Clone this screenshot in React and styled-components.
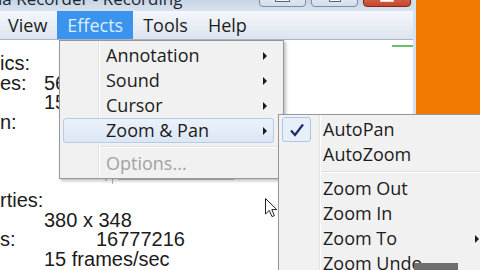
import React from 'react';
import styled, { createGlobalStyle } from 'styled-components';

const GlobalStyle = createGlobalStyle`
  html, body { margin: 0; padding: 0; }
  body { width: 480px; height: 270px; overflow: hidden; font-family: "Open Sans", "Noto Sans", sans-serif; }
`;

const Screen = styled.div`
  position: relative;
  width: 480px;
  height: 270px;
  display: flex;
  overflow: hidden;
  background: #f27a02;
`;

const Window = styled.div`
  width: 413px;
  display: flex;
  flex-direction: column;
  border-right: 3px solid #d3e2f2;
  box-shadow: 1px 0 0 #2d3b4a, 2px 0 0 #7a8796;
  background: #fff;
`;

const TitleBar = styled.div`
  height: 11px;
  flex-shrink: 0;
  display: flex;
  justify-content: space-between;
  overflow: hidden;
  background: linear-gradient(#c6d4e4, #d9e3ef);
`;

const TitleText = styled.div`
  margin-top: -10px;
  margin-left: -2px;
  font-size: 17px;
  line-height: 18px;
  color: #1d2633;
  white-space: nowrap;
`;

const CaptionButtons = styled.div`
  display: flex;
  gap: 5px;
  margin-top: -13px;
  margin-right: 2px;
  height: 20px;
`;

const CaptionButton = styled.div`
  width: ${({ $w }) => $w}px;
  height: 20px;
  border: 1px solid ${({ $close }) => ($close ? '#7d2a1c' : '#7b8ea5')};
  border-radius: 0 0 4px 4px;
  background: ${({ $close }) =>
    $close ? 'linear-gradient(#e08a74, #c8452b)' : 'linear-gradient(#eef3f9, #d3deeb)'};
  display: flex;
  align-items: flex-end;
  justify-content: center;
  padding-bottom: 4px;
  box-sizing: border-box;
`;

const Glyph = styled.div`
  width: ${({ $w }) => $w}px;
  height: 5px;
  border: 1px solid ${({ $light }) => ($light ? '#f4d6cf' : '#56657a')};
  border-top: none;
  background: ${({ $light }) => ($light ? '#fff' : '#f6f8fb')};
`;

const MenuBar = styled.div`
  height: 28px;
  flex-shrink: 0;
  display: flex;
  margin-left: -2px;
  border-bottom: 1px solid #a8b7c8;
  background: linear-gradient(#f4f7fb, #e6ecf4 60%, #dce4ee);
`;

const MenuBarItem = styled.div`
  padding: 0 10px;
  font-size: 18px;
  line-height: 28px;
  color: ${({ $active }) => ($active ? '#dcefff' : '#1c1c1c')};
  background: ${({ $active }) => ($active ? '#3a93ec' : 'transparent')};
`;

const Content = styled.div`
  flex: 1;
  display: flex;
  flex-direction: column;
  background: #fff;
  font-family: "Liberation Sans", Arial, sans-serif;
  font-size: 20px;
  color: #1b1b1b;
`;

const GreenBar = styled.div`
  align-self: flex-end;
  width: 21px;
  height: 2px;
  margin-top: 5px;
  background: #6cc06c;
`;

const InfoList = styled.div`
  margin-top: 7px;
  display: flex;
  flex-direction: column;
`;

const InfoRow = styled.div`
  display: flex;
  height: 19.6px;
  line-height: 19.6px;
  white-space: nowrap;
`;

const Label = styled.span`
  width: 44px;
  flex-shrink: 0;
`;

const Value = styled.span`
  padding-left: ${({ $indent }) => $indent || 0}px;
`;

const Slider = styled.div`
  display: flex;
  align-items: center;
  margin-left: 105px;
  margin-top: 4px;
  gap: 5px;
  height: 8px;
`;

const SliderDot = styled.div`
  width: 2px;
  height: 2px;
  background: #c8c8c8;
`;

const SliderThumb = styled.div`
  width: 1px;
  height: 8px;
  background: #b0b0b0;
`;

const SliderTrack = styled.div`
  width: 116px;
  height: 1px;
  background: #c4c4c4;
`;

const Desktop = styled.div`
  flex: 1;
  background: #f27a02;
`;

const Menu = styled.div`
  position: absolute;
  left: ${({ $left }) => $left}px;
  top: ${({ $top }) => $top}px;
  width: ${({ $width }) => $width}px;
  padding: 2px 0;
  border: 1px solid #979797;
  box-shadow: 2px 2px 3px rgba(0, 0, 0, 0.25);
  font-size: 18px;
  color: #1c1c1c;
  background: linear-gradient(
    to right,
    #f1f1f1 ${({ $gutter }) => $gutter}px,
    #e2e3e3 ${({ $gutter }) => $gutter}px,
    #e2e3e3 ${({ $gutter }) => $gutter + 1}px,
    #fff ${({ $gutter }) => $gutter + 1}px,
    #fff ${({ $gutter }) => $gutter + 2}px,
    #f1f1f1 ${({ $gutter }) => $gutter + 2}px
  );
`;

const MenuItem = styled.div`
  display: flex;
  align-items: center;
  height: 25px;
  margin: 0 9px 0 3px;
  padding-right: 6px;
  box-sizing: border-box;
  border: 1px solid ${({ $hover }) => ($hover ? '#b5cbe8' : 'transparent')};
  border-radius: 3px;
  background: ${({ $hover }) => ($hover ? 'linear-gradient(#eaf1fa, #dce7f5)' : 'transparent')};
  color: ${({ $disabled }) => ($disabled ? '#a2a2a2' : '#1c1c1c')};
  line-height: 25px;
  white-space: nowrap;
`;

const IconCell = styled.div`
  width: 29px;
  height: 25px;
  margin: -1px 0 -1px -1px;
  flex-shrink: 0;
  box-sizing: border-box;
  display: flex;
  align-items: center;
  justify-content: center;
  border: 1px solid ${({ $checked }) => ($checked ? '#aac6ea' : 'transparent')};
  border-radius: 3px;
  background: ${({ $checked }) => ($checked ? '#e7eff9' : 'transparent')};
`;

const ItemLabel = styled.span`
  flex: 1;
  margin-left: ${({ $indent }) => $indent}px;
`;

const Arrow = styled.span`
  width: 0;
  height: 0;
  border-top: 4px solid transparent;
  border-bottom: 4px solid transparent;
  border-left: 4px solid #1a1a1a;
`;

const Separator = styled.div`
  height: ${({ $height }) => $height}px;
  margin-left: ${({ $indent }) => $indent}px;
  display: flex;
  flex-direction: column;
  justify-content: center;

  &::before {
    content: '';
    height: 1px;
    background: #e0e0e0;
    border-bottom: 1px solid #fff;
  }
`;

const Cursor = styled.svg`
  position: absolute;
  left: 265px;
  top: 198px;
`;

const TipBar = styled.div`
  position: absolute;
  left: 414px;
  top: 263px;
  width: 44px;
  height: 10px;
  background: #6e6e6e;
`;

const infoRows = [
  { label: 'ics:', value: '' },
  { label: 'es:', value: '56' },
  { label: '', value: '15' },
  { label: 'n:', value: '' },
  { label: '', value: '' },
  { label: '', value: '' },
  { slider: true },
  { label: 'rties:', value: '' },
  { label: '', value: '380 x 348' },
  { label: 's:', value: '16777216', indent: 52 },
  { label: '', value: '15 frames/sec' },
];

const effectsItems = [
  { label: 'Annotation', sub: true },
  { label: 'Sound', sub: true },
  { label: 'Cursor', sub: true },
  { label: 'Zoom & Pan', sub: true, hover: true },
  { sep: true },
  { label: 'Options...', disabled: true },
];

const zoomItems = [
  { label: 'AutoPan', checked: true },
  { label: 'AutoZoom' },
  { sep: true },
  { label: 'Zoom Out' },
  { label: 'Zoom In' },
  { label: 'Zoom To', sub: true },
  { label: 'Zoom Undo' },
];

const CheckMark = () => (
  <svg width="16" height="14" viewBox="0 0 16 14">
    <path d="M2 7.5 L6 12 L14 1.5" fill="none" stroke="#1d2a70" strokeWidth="2.2" />
  </svg>
);

const MenuList = ({ items, left, top, width, gutter, indent, sepIndent, sepHeight }) => (
  <Menu $left={left} $top={top} $width={width} $gutter={gutter}>
    {items.map((it, i) =>
      it.sep ? (
        <Separator key={i} $indent={sepIndent} $height={sepHeight} />
      ) : (
        <MenuItem key={i} $hover={it.hover} $disabled={it.disabled}>
          <IconCell $checked={it.checked}>{it.checked && <CheckMark />}</IconCell>
          <ItemLabel $indent={indent}>{it.label}</ItemLabel>
          {it.sub && <Arrow />}
        </MenuItem>
      )
    )}
  </Menu>
);

export default function App() {
  return (
    <>
      <GlobalStyle />
      <Screen>
        <Window>
          <TitleBar>
            <TitleText>ia Recorder - Recording</TitleText>
            <CaptionButtons>
              <CaptionButton $w={47}>
                <Glyph $w={13} />
              </CaptionButton>
              <CaptionButton $w={47}>
                <Glyph $w={10} />
              </CaptionButton>
              <CaptionButton $w={48} $close>
                <Glyph $w={12} $light />
              </CaptionButton>
            </CaptionButtons>
          </TitleBar>
          <MenuBar>
            <MenuBarItem>View</MenuBarItem>
            <MenuBarItem $active>Effects</MenuBarItem>
            <MenuBarItem>Tools</MenuBarItem>
            <MenuBarItem>Help</MenuBarItem>
          </MenuBar>
          <Content>
            <GreenBar />
            <InfoList>
              {infoRows.map((r, i) =>
                r.slider ? (
                  <InfoRow key={i}>
                    <Slider>
                      <SliderDot />
                      <SliderThumb />
                      <SliderTrack />
                    </Slider>
                  </InfoRow>
                ) : (
                  <InfoRow key={i}>
                    <Label>{r.label}</Label>
                    <Value $indent={r.indent}>{r.value}</Value>
                  </InfoRow>
                )
              )}
            </InfoList>
          </Content>
        </Window>
        <Desktop />
        <MenuList items={effectsItems} left={59} top={40} width={223} gutter={38} indent={14} sepIndent={40} sepHeight={8} />
        <MenuList items={zoomItems} left={278} top={114} width={216} gutter={40} indent={12} sepIndent={42} sepHeight={9} />
        <Cursor width="13" height="20" viewBox="0 0 13 20">
          <path d="M0.5 0.5 L0.5 16 L4.3 12.4 L7 18.6 L9.4 17.6 L6.8 11.6 L11.8 11.6 Z" fill="#fff" stroke="#222" strokeWidth="1" />
        </Cursor>
        <TipBar />
      </Screen>
    </>
  );
}
